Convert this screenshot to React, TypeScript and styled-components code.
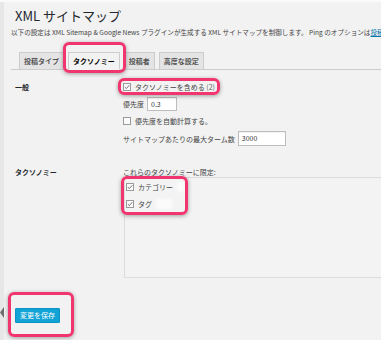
import React from "react";
import styled, { createGlobalStyle } from "styled-components";

const Global = createGlobalStyle`
  html, body { margin: 0; padding: 0; background: #f2f2f2; }
  body { font-family: "Noto Sans CJK JP", "Noto Sans", sans-serif; color: #444; }
`;

const Page = styled.div`
  width: 381px;
  height: 340px;
  overflow: hidden;
  display: flex;
  background: #f2f2f2;
  border-top: 2px solid #fafafa;
  box-sizing: border-box;
`;

const SideEdge = styled.div`
  width: 4px;
  flex: none;
  background: #e7e7e7;
  display: flex;
  flex-direction: column;
  justify-content: flex-end;
  padding-bottom: 22px;
  box-sizing: border-box;
`;

const Main = styled.div`
  flex: 1;
  min-width: 0;
  padding-left: 7px;
  display: flex;
  flex-direction: column;
  align-items: flex-start;
  overflow: hidden;
`;

const Title = styled.h1`
  font-size: 13px;
  line-height: 16px;
  font-weight: 400;
  color: #23282d;
  margin: 6px 0 0 4px;
`;

const Desc = styled.p`
  font-size: 6.6px;
  line-height: 10px;
  margin: 3px 0 0 0;
  white-space: nowrap;
  color: #444;
`;

const Link = styled.a`
  color: #0073aa;
  text-decoration: underline;
`;

const TabBar = styled.div`
  align-self: stretch;
  display: flex;
  align-items: flex-end;
  gap: 4px;
  margin-top: 15px;
  padding-left: 8px;
  border-bottom: 1px solid #cccccc;
  height: 17px;
`;

const Tab = styled.div<{ $active?: boolean }>`
  box-sizing: border-box;
  height: 18px;
  margin-bottom: -1px;
  padding: 0 4px;
  border: 1px solid #cccccc;
  border-bottom-color: ${(p) => (p.$active ? "#f2f2f2" : "#cccccc")};
  background: ${(p) => (p.$active ? "#f2f2f2" : "#e4e4e4")};
  color: ${(p) => (p.$active ? "#000" : "#555")};
  font-size: 7px;
  font-weight: 700;
  line-height: 16px;
  white-space: nowrap;
`;

const Highlight = styled.div<{ $t: number; $r: number; $b: number; $l: number }>`
  position: relative;
  display: inline-flex;
  &::after {
    content: "";
    position: absolute;
    top: ${(p) => -p.$t}px;
    right: ${(p) => -p.$r}px;
    bottom: ${(p) => -p.$b}px;
    left: ${(p) => -p.$l}px;
    border: 3px solid #f0356f;
    border-radius: 6px;
    box-shadow: 0 1px 4px rgba(0, 0, 0, 0.35);
    pointer-events: none;
  }
`;

const Form = styled.div`
  align-self: stretch;
  display: grid;
  grid-template-columns: 108px 1fr;
  padding-left: 4px;
  margin-top: 11px;
  row-gap: 20px;
`;

const Label = styled.div`
  font-size: 7px;
  font-weight: 700;
  line-height: 12px;
  color: #23282d;
`;

const Stack = styled.div`
  display: flex;
  flex-direction: column;
  align-items: flex-start;
  gap: 4px;
`;

const CheckRow = styled.label`
  display: inline-flex;
  align-items: center;
  gap: 4px;
  height: 12px;
  font-size: 7px;
  line-height: 12px;
  color: #444;
  white-space: nowrap;
`;

const Box = styled.span`
  width: 8px;
  height: 8px;
  box-sizing: border-box;
  border: 1px solid #9a9a9a;
  background: #fbfbfb;
  display: inline-flex;
  align-items: center;
  justify-content: center;
  flex: none;
`;

const Count = styled.span`
  color: #666;
`;

const FieldRow = styled.div<{ $h: number }>`
  display: flex;
  align-items: center;
  gap: 3px;
  height: ${(p) => p.$h}px;
  font-size: 7px;
  color: #444;
  white-space: nowrap;
`;

const Input = styled.div<{ $w: number; $h: number }>`
  box-sizing: border-box;
  width: ${(p) => p.$w}px;
  height: ${(p) => p.$h}px;
  border: 1px solid #bdbdbd;
  background: #fff;
  font-size: 7px;
  line-height: ${(p) => p.$h - 2}px;
  padding-left: 3px;
  color: #333;
  box-shadow: inset 0 1px 1px rgba(0, 0, 0, 0.05);
`;

const Caption = styled.div`
  font-size: 7px;
  line-height: 10px;
  color: #444;
  margin-top: 1px;
  white-space: nowrap;
`;

const ListBox = styled.div`
  box-sizing: border-box;
  margin-left: 1px;
  width: calc(100% + 30px);
  height: 101px;
  border: 1px solid #dcdcdc;
  background: #f3f3f3;
  padding: 3px 0 0 1px;
  display: flex;
  flex-direction: column;
  align-items: flex-start;
`;

const ListInner = styled.div`
  display: flex;
  flex-direction: column;
  gap: 5px;
`;

const Redact = styled.span<{ $w: number }>`
  display: inline-block;
  width: ${(p) => p.$w}px;
  height: 10px;
  background: #fbfbfb;
  filter: blur(1px);
`;

const Footer = styled.div`
  margin: 21px 0 0 4px;
`;

const SaveButton = styled.button`
  box-sizing: border-box;
  height: 15px;
  padding: 0 4px;
  border: 1px solid #0a93c4;
  background: #12a3d6;
  color: #fff;
  font-family: "Noto Sans CJK JP", sans-serif;
  font-size: 7px;
  line-height: 13px;
  border-radius: 1px;
  cursor: pointer;
`;

const Check = () => (
  <svg width="6" height="6" viewBox="0 0 6 6">
    <path d="M0.8 3.1 L2.4 4.6 L5.3 1.2" fill="none" stroke="#777" strokeWidth="1" />
  </svg>
);

export default function App() {
  return (
    <>
      <Global />
      <Page>
        <SideEdge>
          <svg width="4" height="11" viewBox="0 0 4 11">
            <polygon points="4,0 0,5.5 4,11" fill="#6f6f6f" />
          </svg>
        </SideEdge>
        <Main>
          <Title>XML サイトマップ</Title>
          <Desc>
            以下の設定は XML Sitemap &amp; Google News プラグインが生成する XML サイトマップを制御します。 Ping のオプションは
            <Link>投稿</Link>
          </Desc>
          <TabBar>
            <Tab>投稿タイプ</Tab>
            <Highlight $t={10} $r={6} $b={4} $l={5}>
              <Tab $active>タクソノミー</Tab>
            </Highlight>
            <Tab>投稿者</Tab>
            <Tab>高度な設定</Tab>
          </TabBar>
          <Form>
            <Label>一般</Label>
            <Stack>
              <Highlight $t={3} $r={5} $b={2} $l={5}>
                <CheckRow>
                  <Box>
                    <Check />
                  </Box>
                  <span>
                    タクソノミーを含める <Count>(2)</Count>
                  </span>
                </CheckRow>
              </Highlight>
              <FieldRow $h={14}>
                優先度
                <Input $w={30} $h={14}>0.3</Input>
              </FieldRow>
              <CheckRow>
                <Box />
                <span>優先度を自動計算する。</span>
              </CheckRow>
              <FieldRow $h={15}>
                サイトマップあたりの最大ターム数
                <Input $w={48} $h={15}>3000</Input>
              </FieldRow>
            </Stack>
            <Label>タクソノミー</Label>
            <div>
              <Caption>これらのタクソノミーに限定:</Caption>
              <ListBox>
                <Highlight $t={5} $r={4} $b={5} $l={5}>
                  <ListInner>
                    <CheckRow>
                      <Box>
                        <Check />
                      </Box>
                      <span>カテゴリー</span>
                      <Redact $w={7} />
                    </CheckRow>
                    <CheckRow>
                      <Box>
                        <Check />
                      </Box>
                      <span>タグ</span>
                      <Redact $w={16} />
                    </CheckRow>
                  </ListInner>
                </Highlight>
              </ListBox>
            </div>
          </Form>
          <Footer>
            <Highlight $t={16} $r={14} $b={14} $l={7}>
              <SaveButton>変更を保存</SaveButton>
            </Highlight>
          </Footer>
        </Main>
      </Page>
    </>
  );
}
